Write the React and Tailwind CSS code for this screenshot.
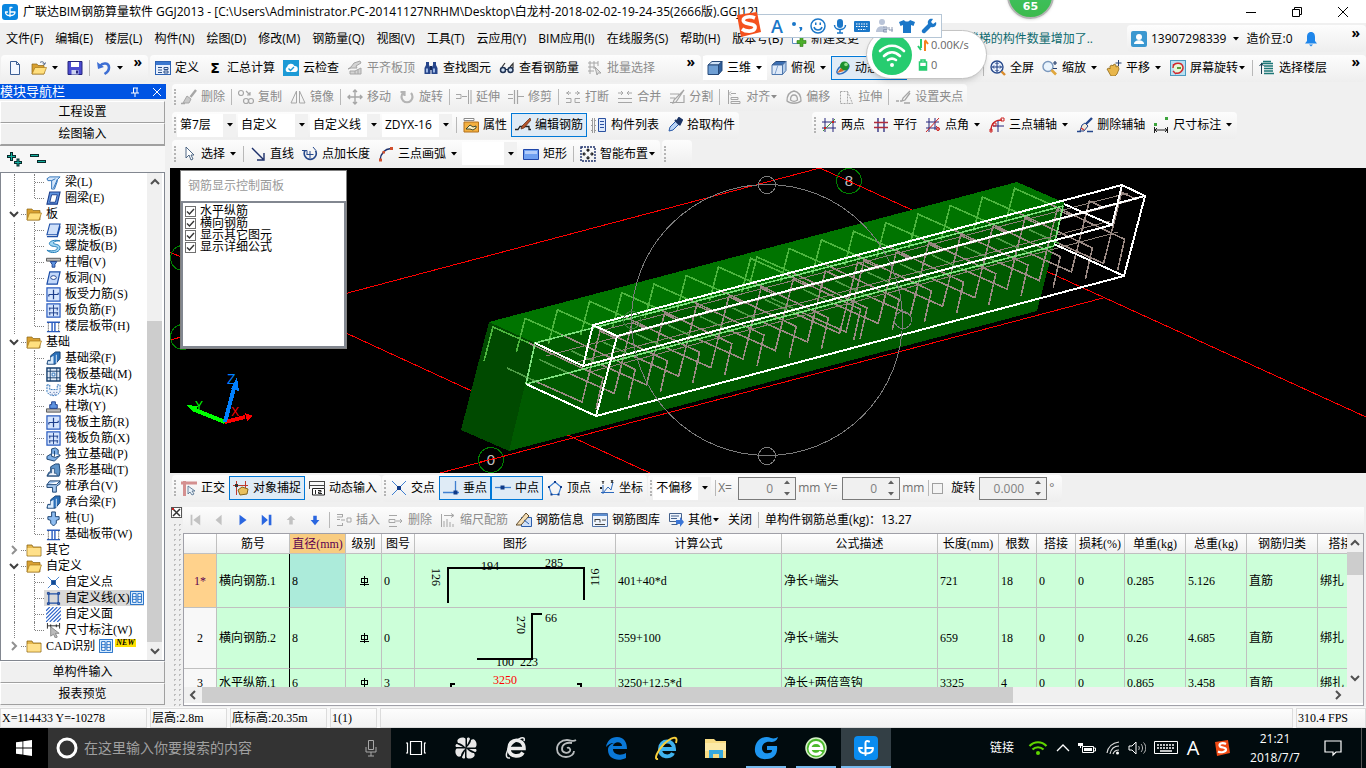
import React from 'react';
import clsx from 'clsx';

const UI_FONT = "font-['Open_Sans','Noto_Sans_CJK_SC',sans-serif]";
const SONG_FONT = "font-['Liberation_Serif','Noto_Sans_CJK_SC',serif]";

/* ---------- icons, all on a 16x16 grid ---------- */

const G = '#a6a6a6';

const icons = {
  logo: (
    <>
      <rect width="16" height="16" rx="3" fill="#0a86e0" />
      <path d="M10 3.500H8V12.500M5.500 8H3.500c0 2.500 2 3.500 4.500 3.500M8 8h5c0 2.300-1.500 3.500-5 3.500" stroke="#fff" strokeWidth="1.300" fill="none" strokeLinecap="round" strokeLinejoin="round" />
    </>
  ),
  newFile: <path d="M3.500 1.500h6l3 3v10h-9zM9.500 1.500v3h3" fill="#f4f8ff" stroke="#3d5f94" />,
  open: (
    <>
      <path d="M1 4h5l1 1.500h6V14H1z" fill="#d9a030" stroke="#8a6414" strokeWidth=".7" />
      <path d="M4 7.500h11.500L13 14H1z" fill="#ffdf7e" stroke="#a87a1c" strokeWidth=".7" />
      <path d="M9 2.500c2-1.500 4-.5 4.500 1.500M14.500 2.500l-.8 2-2-.8" stroke="#4a5e80" fill="none" />
    </>
  ),
  folderOpen: (
    <>
      <path d="M1 3h5l1 1.500h7V14H1z" fill="#d9a030" stroke="#8a6414" strokeWidth=".7" />
      <path d="M3.500 7H15.500L13 14H1z" fill="#ffdf7e" stroke="#a87a1c" strokeWidth=".7" />
    </>
  ),
  save: (
    <>
      <path d="M1 1.500h14v13H1z" fill="#4b4bd0" stroke="#26267c" />
      <path d="M4 2h8v5H4z" fill="#fff" />
      <path d="M4.500 10h7v4.500h-7z" fill="#cdd3f0" />
      <path d="M9 10.500h2v3H9z" fill="#26267c" />
    </>
  ),
  undo: (
    <>
      <path d="M4 6c3-4 9-3 9 1.500 0 3-2 5-4.500 6.500" stroke="#3e6fd4" strokeWidth="2.600" fill="none" />
      <path d="M1 2l1 7 6-2z" fill="#3e6fd4" />
    </>
  ),
  define: (
    <>
      <rect x=".5" y="1.500" width="15" height="13" fill="#e8f1ff" stroke="#2c62b4" />
      <path d="M1 2h14v3H1z" fill="#3b78d0" />
      <path d="M3 7.500h4M3 10h4M3 12.500h4M9 7.500h4v2H9zM9 11h4v2H9z" stroke="#2c4f86" fill="none" />
    </>
  ),
  cloudCheck: (
    <>
      <rect width="16" height="16" fill="#1c9ad6" />
      <path d="M4 12a3 3 0 0 1 0-5 4 4 0 0 1 7.500-1 3 3 0 0 1 .5 6z" fill="#fff" />
      <path d="M5.500 8.500l2 2 3.500-3.500" stroke="#1c9ad6" strokeWidth="1.400" fill="none" />
    </>
  ),
  slabTop: (
    <>
      <path d="M1 9l3-2 3-4 6-2 1 2-5 3 1 2H4z" fill="#d4d4d4" stroke={G} />
      <path d="M3 11h5l6-3v6H3zM8 11v3M11 9.500V14" fill="#d4d4d4" stroke={G} />
    </>
  ),
  binoculars: (
    <>
      <path d="M1.500 14V8L3 5V2h3v3l1.500 3v6zM8.500 14V8L10 5V2h3v3l1.500 3v6z" fill="#26458a" />
      <path d="M3 8.500h2v4H3zM10 8.500h2v4h-2z" fill="#9db8e6" />
      <path d="M7 6h2v4H7z" fill="#13285a" />
    </>
  ),
  glasses: (
    <>
      <path d="M3 7l3-4M11 7l3-3.500V8" stroke="#333" strokeWidth="1.200" fill="none" />
      <circle cx="4" cy="10" r="2.500" stroke="#1d3050" strokeWidth="1.500" fill="#cfe0f4" />
      <circle cx="11.500" cy="10" r="2.500" stroke="#1d3050" strokeWidth="1.500" fill="#cfe0f4" />
      <path d="M6.500 9.500h2.500" stroke="#1d3050" />
    </>
  ),
  batch: <path d="M1 3h10M1 7h7M1 11h6M3 1v13M7 1v8M11 1v5M8 7l6 6-3 0-1 2z" stroke={G} fill="#ddd" />,
  cube: (
    <>
      <path d="M1 5l4-3.500h10L11.500 5z" fill="#cfe2f7" stroke="#274a7a" />
      <path d="M1 5h10.500v9.500H1z" fill="#6f9fd4" stroke="#274a7a" />
      <path d="M11.500 5L15 1.500v9l-3.500 4z" fill="#2f5f9c" stroke="#274a7a" />
    </>
  ),
  topView: (
    <>
      <path d="M1 5l4-3.500h10L11.500 5z" fill="#3b6fb4" stroke="#274a7a" />
      <path d="M1 5h10.500v9.500H1z" fill="#dfeaf8" stroke="#4e77ad" />
      <path d="M11.500 5L15 1.500v9l-3.500 4z" fill="#b7cfeb" stroke="#4e77ad" />
      <path d="M4 14l3-9" stroke="#7fa2cf" />
    </>
  ),
  orbit: (
    <>
      <ellipse cx="8" cy="9" rx="7" ry="3.500" transform="rotate(-35 8 9)" fill="none" stroke="#2f6fc0" strokeWidth="1.400" />
      <circle cx="9.500" cy="6" r="4.500" fill="#1d8f2d" />
      <circle cx="11" cy="4.500" r="1.800" fill="#8fe08a" />
      <path d="M2 13l4-5 3 3z" fill="#d66a28" />
    </>
  ),
  fullScreen: (
    <>
      <circle cx="7" cy="7" r="6" fill="#eaf2fd" stroke="#27498c" strokeWidth="1.400" />
      <path d="M7 2.500v9M2.500 7h9M5.500 4L7 2.500 8.500 4M5.500 10L7 11.500 8.500 10M4 5.500L2.500 7 4 8.500M10 5.500L11.500 7 10 8.500" stroke="#1b3a80" fill="none" />
      <path d="M11.500 11.500l3.500 3.500" stroke="#d98b2b" strokeWidth="2.400" />
    </>
  ),
  zoom: (
    <>
      <circle cx="6" cy="6.500" r="5" fill="#eaf4fd" stroke="#7b98bd" strokeWidth="1.400" />
      <path d="M9.500 10l4.500 4.500" stroke="#e0a63c" strokeWidth="2.600" />
      <path d="M11 3h4M13 1v4M11 8.500h4" stroke="#26406f" strokeWidth="1.200" />
    </>
  ),
  pan: (
    <>
      <path d="M1 9l2-1 1 1V6l2-1 1 1 1-2 2 1v2l2-1 1 3-2 5-2 2H5z" fill="#e8b64c" stroke="#8f6a1c" strokeWidth=".8" />
      <path d="M12.500 0v6M9.500 3h6" stroke="#26406f" />
    </>
  ),
  rotateScreen: (
    <>
      <rect x=".5" y=".5" width="15" height="15" fill="#b9e0f2" stroke="#4c9ac0" />
      <circle cx="8" cy="8" r="4.500" fill="#e9f6d6" />
      <path d="M3 7c1-5 9-5 10 0 .5 4-4 7-7 6M3 11l3 3M3.500 4L3 8" stroke="#d6282a" strokeWidth="1.400" fill="none" />
      <path d="M7 8h4" stroke="#5b9c3c" strokeWidth="2" />
    </>
  ),
  floors: (
    <>
      <path d="M5 6h9M5 8.500h9M5 11h9M5 13.500h10" stroke="#1c7777" strokeWidth="1.400" />
      <path d="M2 3.500h12M4 1.500h8" stroke="#1c7777" strokeWidth="1.600" />
      <path d="M2.500 3v11M.5 6l2-2.500 2 2.500" stroke="#173f52" fill="none" />
    </>
  ),
  erase: (
    <>
      <path d="M15 1L9.500 8" stroke={G} strokeWidth="2.400" />
      <path d="M6 7l4 3-2 4H2z" fill="#c9c9c9" stroke={G} />
      <path d="M0 14.500h4" stroke={G} strokeWidth="1.500" />
    </>
  ),
  copy: (
    <g fill="none" stroke={G} strokeWidth="1.200">
      <circle cx="3" cy="4" r="2.500" />
      <circle cx="8" cy="12" r="2.500" />
      <circle cx="13" cy="12" r="2.500" />
      <path d="M8 2l4 4M12 3v3H9" />
    </g>
  ),
  mirror: <path d="M6.500 2v12H1zM9.500 2v12H15z" stroke={G} fill="none" />,
  move: <path d="M8 1v14M1 8h14M6 3l2-2 2 2M6 13l2 2 2-2M3 6L1 8l2 2M13 6l2 2-2 2" stroke={G} strokeWidth="1.400" fill="none" />,
  rotate: <path d="M4 4a5.500 5.500 0 1 0 8 0M1.500 3h4v4" stroke="#b4b4b4" strokeWidth="2.200" fill="none" />,
  extend: <path d="M0 5.500h5v4H0M6 7.500h5M12.500 1v14M15 1v14" stroke={G} fill="none" />,
  trim: <path d="M0 5.500h5M0 9.500h5M10 7.500h6M6.500 1v14M9.500 1v14" stroke={G} strokeWidth="1.200" fill="none" />,
  breakIt: <path d="M1 4h5M10 4h5M4 2l-2 2 2 2M12 2l2 2-2 2M1 9.500h5v4H1M15 9.500h-5v4h5" stroke={G} fill="none" />,
  merge: <path d="M1 4h5M10 4h5M4 2l2 2-2 2M12 2l-2 2 2 2M1 9.500h14M1 13.500h14" stroke={G} fill="none" />,
  split: <path d="M1 5h9M1 13.500h14V6M1 9h5M15 1L5 11l-1 3 3-1z" stroke={G} strokeWidth="1.200" fill="none" />,
  align: <path d="M2.500 1v14M5 4.500h5M5 2.500l-2 2 2 2M5 8.500h7v2H5zM5 12.500h9v2H5z" stroke={G} fill="none" />,
  offset: <path d="M1 12c0-5 2-9 7-10 5 1 7 5 7 10-3 3-11 3-14 0zM4.500 11c0-3 1-5 3.500-5s3.500 2 3.500 5c-2 1.500-5 1.500-7 0z" stroke={G} strokeWidth="1.300" fill="none" />,
  stretch: <path d="M2.500 2.500h7v12h-7zM9.500 2.500l5 12h-5" stroke={G} strokeDasharray="2 1" fill="none" />,
  grip: <path d="M1 12h3M5 12h2M15 2L8 9l-1 3 3-1 5-7M9 14h6" stroke={G} strokeWidth="1.300" fill="none" />,
  property: (
    <>
      <path d="M1 1.500h10v2H1z" fill="#fff" stroke="#8a8a8a" />
      <path d="M1 5h14.500v10H1z" fill="#f3b040" stroke="#b2711d" />
      <path d="M3 12l4-4 3 2 3-1v2l-3 2-3-1z" fill="#fff3c4" stroke="#2a3c2a" strokeWidth=".9" />
    </>
  ),
  editBar: (
    <>
      <path d="M0 12.500h3l2-3h9v3h2" stroke="#222" strokeWidth="1.300" fill="none" />
      <path d="M15 1L7 9l-1 3 3-1 7-8z" fill="#b4552c" stroke="#5c2b14" strokeWidth=".7" />
    </>
  ),
  compList: (
    <>
      <path d="M1 2h3v3H1zM1 7h3v3H1zM1 12h3v3H1z" fill="none" stroke="#444" strokeDasharray="1 1" />
      <path d="M7.500 1.500h7v13h-7z" fill="#dce8fb" stroke="#2b51a0" />
      <path d="M9 4.500h4M9 7.500h4M9 10.500h4" stroke="#2b51a0" />
    </>
  ),
  dropper: (
    <>
      <path d="M2 14l1-4 6-6 3 3-6 6z" fill="#b9d3f5" stroke="#2a5aa8" />
      <path d="M8 3l5 5M10 4l2-3 3 2-2 4z" stroke="#1c3566" strokeWidth="2" fill="#1c3566" />
    </>
  ),
  twoPoint: (
    <>
      <path d="M4 1v14M12 1v14M1 5h14M1 11h14" stroke="#26267c" />
      <path d="M2 14L14 2" stroke="#3f8f3f" />
      <path d="M3 10h2v2H3zM11 4h2v2h-2z" fill="#c22" />
    </>
  ),
  parallel: (
    <>
      <path d="M5 1v14M11 1v14" stroke="#26267c" strokeWidth="1.300" />
      <path d="M1 5.500h14M1 10.500h14" stroke="#b02a3a" strokeWidth="1.300" />
    </>
  ),
  pointAngle: (
    <>
      <path d="M4 1v14M10 1v12M1 5h13M1 11h11" stroke="#26267c" />
      <path d="M1 15L14 1M11 9a4 4 0 0 1 2 5" stroke="#c22" fill="none" />
      <circle cx="13" cy="12" r="1.500" fill="none" stroke="#c22" />
    </>
  ),
  threeAxis: (
    <>
      <path d="M2 14C2 6 6 3 13 3" stroke="#c22" strokeWidth="1.300" fill="none" />
      <path d="M9 4v11M4 9h11" stroke="#26267c" />
      <path d="M1 12h2v3H1zM12 1h3v3h-3zM4 6h3v3H4z" fill="none" stroke="#c22" />
    </>
  ),
  delAxis: (
    <>
      <path d="M15 1L9 7" stroke="#26478c" strokeWidth="2.400" />
      <path d="M5 8l3-2 3 3-4 5H3z" fill="#f4ead8" stroke="#26478c" />
      <path d="M4 11l3 2" stroke="#c33" strokeWidth="1.500" />
      <path d="M0 14.500h4M10 14.500h6" stroke="#26478c" strokeWidth="1.500" />
    </>
  ),
  dimension: (
    <>
      <path d="M1 6h3v3H1zM12 0h3v3h-3z" fill="#3da53d" />
      <path d="M1.500 10v6M14.500 10v6M2 13h12M4 11l-2 2 2 2M12 11l2 2-2 2" stroke="#222" fill="none" />
    </>
  ),
  pointer: <path d="M5 1v11l3-3 2 5 2-1-2-4h3z" fill="#fff" stroke="#3c5878" strokeWidth=".9" />,
  line: <path d="M2 2l11 11M14 7v7H7" stroke="#1c2f6a" strokeWidth="1.400" fill="none" />,
  lengthPt: (
    <>
      <path d="M3 4.500a6 6 0 1 0 10.500 0" stroke="#27498c" strokeWidth="1.600" fill="none" />
      <path d="M0 4.500h5v4M11 1l2.500 3M8 5v7M4.500 8.500h7" stroke="#27498c" fill="none" />
    </>
  ),
  arc: (
    <>
      <path d="M2 14C3 7 7 3 13 2.500" stroke="#1c2f6a" strokeWidth="1.300" fill="none" />
      <path d="M1 12.500h3v3H1zM12 1h3v3h-3zM4.500 5h2.500v2.500H4.500z" fill="#d0502e" />
    </>
  ),
  rect: (
    <>
      <path d="M.5 3.500h15v10H.5z" fill="#6fa0f0" stroke="#1f46a8" />
      <path d="M2 5h12v3H2z" fill="#b3cdfa" />
    </>
  ),
  smart: (
    <>
      <path d="M1 1h14v14H1z" fill="none" stroke="#1c2f6a" strokeWidth="1.400" strokeDasharray="2 1" />
      <path d="M8 3v3M8 10v3M3 8h3M10 8h3M6.500 4.500L8 3l1.500 1.500M6.500 11.500L8 13l1.500-1.500M4.500 6.500L3 8l1.500 1.500M11.500 6.500L13 8l-1.500 1.500" stroke="#222" strokeWidth="1.200" fill="none" />
    </>
  ),
  ortho: (
    <>
      <path d="M3.500 1v15M0 3h16" stroke="#d49090" strokeWidth="3" />
      <path d="M7 6v8l2-2 2 3 2-1-2-3h3z" fill="#e8f0f8" stroke="#4b6a88" strokeWidth=".8" />
    </>
  ),
  snap: (
    <>
      <path d="M3.500 1v14M0 5.500h15M12.500 1v7" stroke="#c0392b" />
      <path d="M5 10l4-3 6 2-1 5-7 1z" fill="#e9c05e" stroke="#86641c" />
      <path d="M2 4h3v3H2z" fill="#333" />
    </>
  ),
  dynInput: (
    <>
      <path d="M0 1.500h16M0 5.500h16M.5 1v8M15.500 1v7" stroke="#444" fill="none" />
      <path d="M3.500 8.500h12v6.500h-12z" fill="#fff" stroke="#222" />
      <path d="M6.500 10v4M9 10.500h3v1.500H9.500v1.500H13" stroke="#222" fill="none" />
    </>
  ),
  cross: (
    <>
      <path d="M1 1l14 14M15 1L1 15" stroke="#3f7fd0" />
      <path d="M6 6h4v4H6z" fill="#0f3a88" />
    </>
  ),
  perp: (
    <>
      <path d="M0 12.500h16M12.500 1v11" stroke="#3f7fd0" strokeWidth="1.300" />
      <path d="M10.500 10.500h4v4h-4z" fill="#0f3a88" />
    </>
  ),
  mid: (
    <>
      <path d="M0 7.500h16" stroke="#3f7fd0" strokeWidth="1.300" />
      <path d="M5.500 5.500h4v4h-4z" fill="#0f3a88" />
    </>
  ),
  vertex: (
    <>
      <path d="M8 2l6 5-2.500 7.500h-7L2 7z" fill="none" stroke="#3f7fd0" strokeWidth="1.200" />
      <path d="M7 1h2v2H7zM1 6h2v2H1zM13 6h2v2h-2zM3.500 13.500h2v2h-2zM10.500 13.500h2v2h-2z" fill="#0f3a88" />
    </>
  ),
  coord: (
    <>
      <path d="M4 5v9M2 12.500h13M4 13l5-6 3 3 2-8" stroke="#2b68bc" fill="none" />
      <path d="M3 1l1 1.500V4M5 1L4 2.500M1 7l2 2M3 7L1 9M12 0l2 3M14 0l-2 3" stroke="#222" fill="none" />
    </>
  ),
  insert: <path d="M1 2.500h5M1 7.500h3M1 13.500h5M6.500 2v3H1M6.500 11v3M5 8h4M11 6h4v4h-4z" stroke={G} fill="none" />,
  remove: <path d="M1 3.500h8M1 7.500h6v3H1zM1 14.500h8M8 9h6M12 7l2 2-2 2" stroke={G} fill="none" />,
  scaleBar: <path d="M1.500 2v13M4 9v6M7 7v8M10 10v5M13 12v3M4 3.500h9M11 1.500l3 2-3 2" stroke={G} fill="none" />,
  barInfo: (
    <>
      <path d="M5.500 5.500h10v9h-10z" fill="#cfe0f8" stroke="#2b5cab" />
      <path d="M0 13L10 1l3 3L5 13z" fill="#f4ddb4" stroke="#5e4a2a" />
      <path d="M8 8l5 4" stroke="#2b5cab" />
    </>
  ),
  barLib: (
    <>
      <path d="M.5 1.500h15v13H.5z" fill="#eef4fc" stroke="#5173a8" />
      <path d="M1 2h14v2H1z" fill="#5f8fd0" />
      <path d="M3 7.500h5v3M3 7v3M10 8h4M3 12.500h10" stroke="#444" fill="none" />
    </>
  ),
  other: (
    <>
      <path d="M1.500 1.500h12v8h-12zM3 4h8M3 6.500h6M3.500 12.500h6" stroke="#44618c" fill="#eef4fc" />
      <path d="M8 8h4V5l4 5-4 5v-3H8z" fill="#3c76d6" />
    </>
  ),
  first: <path d="M3 2h2v12H3zM14 2v12L6 8z" fill="#c2c2c2" />,
  prev: <path d="M11 2v12L4 8z" fill="#c2c2c2" />,
  next: <path d="M4 2v12l8-6z" fill="#2a66e0" />,
  last: <path d="M2 2v12l7-6zM10 2h3v12h-3z" fill="#2a66e0" />,
  up: <path d="M8 3l5 5h-3v5H6V8H3z" fill="#c2c2c2" />,
  down: <path d="M8 14l5-6h-3V3H6v5H3z" fill="#2a66e0" />,
  folder: (
    <>
      <path d="M1 3h5l1 2h8v9H1z" fill="#e6b84c" stroke="#8a6414" strokeWidth=".8" />
      <path d="M1.500 6h13v7.500h-13z" fill="#ffe08a" />
    </>
  ),
  beam: <path d="M1 4l3-2h11l-3 3v2l-3 8H6V6H2zM6 6l4-2M8 14l4-9" fill="#d5e7fb" stroke="#2a6fb8" />,
  ringBeam: (
    <>
      <path d="M4 1h11l-3 13H1z" fill="#5f94e0" stroke="#1d3f8c" strokeWidth="1.200" />
      <path d="M6 4h6l-2 8H4z" fill="#fff" stroke="#1d3f8c" />
    </>
  ),
  slab: (
    <>
      <path d="M4 1h11l-3 11.500H1z" fill="#cfe0fa" stroke="#1d4fa8" strokeWidth="1.200" />
      <path d="M1 14.500h11l3-11" stroke="#1d4fa8" strokeWidth="1.500" fill="none" />
    </>
  ),
  spiral: <path d="M15 2C8 0 2 3 4 6s9 1 8 4-7 3-11 2c4 4 13 3 14-2s-8-4-7-6 4-2 7-2z" fill="#9fd6f4" stroke="#1c78b4" />,
  cap: (
    <>
      <path d="M.5 3.500h15v3H.5z" fill="#bbb" stroke="#555" />
      <path d="M4.500 7h7l-2 3v3h-3v-3z" fill="#5f94e0" stroke="#1d3f8c" />
    </>
  ),
  hole: (
    <>
      <path d="M4 1h11l-3 13H1z" fill="#c2d8fa" stroke="#1d4fa8" strokeWidth="1.300" />
      <ellipse cx="8" cy="7" rx="3" ry="2" fill="#fff" stroke="#1d3f8c" />
    </>
  ),
  gridBar: (
    <>
      <path d="M1 1h14v14H1z" fill="#d5e5fd" stroke="#2a5cc0" strokeWidth="1.300" />
      <path d="M8 3v10M3 8h10M3 8v2M13 8V6" stroke="#1d3f8c" strokeWidth="1.300" fill="none" />
    </>
  ),
  gridBar2: (
    <>
      <path d="M1 1h14v14H1z" fill="#d5e5fd" stroke="#2a5cc0" strokeWidth="1.300" />
      <path d="M8 2v12M3 5.500h10M3 10.500h10M4 5v3M12 5v3M4 10v3M12 10v3" stroke="#1d3f8c" fill="none" />
    </>
  ),
  strip: (
    <>
      <path d="M1 3.500h14M1 13.500h14M6.500 3v10M9.500 3v10" stroke="#2a5cc0" strokeWidth="1.500" />
      <path d="M2.500 4v9M13.500 4v9" stroke="#333" strokeDasharray="1 1" />
    </>
  ),
  foundBeam: (
    <>
      <path d="M1 14l1-4h3V5l5-4h5v7l-5 6z" fill="#2a6fb8" stroke="#17406f" />
      <path d="M2 13.500V11h3V7l3-2v8.500z" fill="#dcecfb" />
      <path d="M11 13.500V4" stroke="#dcecfb" />
    </>
  ),
  raft: (
    <>
      <path d="M1 1h14v14H1z" fill="#e2ecf8" stroke="#17406f" strokeWidth="1.500" />
      <path d="M4.500 1v14M11.500 1v14M1 4.500h14M1 11.500h14" stroke="#17406f" />
      <path d="M6.500 6.500h3v3h-3z" fill="#fff" stroke="#2a6fb8" />
    </>
  ),
  sump: (
    <>
      <path d="M1 2h3v5h8V2h3v7c-2 6-12 6-14 0z" fill="#eef4fc" stroke="#2a6fb8" strokeDasharray="2 1" />
      <path d="M4 10h1M8 10h1M11 10h1M6 12h1M9 12h1" stroke="#1d3f8c" />
    </>
  ),
  pier: (
    <>
      <path d="M.5 10.500h15v3.500H.5z" fill="#bbb" stroke="#555" />
      <path d="M6 3h4v3h2v4H4V6h2z" fill="#5f94e0" stroke="#1d3f8c" />
    </>
  ),
  isolated: <path d="M1 10l5-3V2l4-1 3 2v4l2 2-6 6-8-2zM6 7v3l4 1 5-2M9 4v6" fill="#7fb0e6" stroke="#17406f" />,
  stripFound: (
    <>
      <path d="M1 14l2-4 2-1V4l5-3h4l1 8-1 5z" fill="#5f94c8" stroke="#17406f" />
      <path d="M2 13.500l2-3h2V6h3v5h2l1 2.500z" fill="#eef4fc" stroke="#17406f" strokeWidth=".7" />
    </>
  ),
  pileCap: <path d="M1 6l3-4h11v3l-4 3v6H7V9H1zM1 6h10l4-4" fill="#a8caf0" stroke="#17406f" />,
  pile: <path d="M6 1h4v5h4v3l-3 1v3l-3 3-3-3v-3L2 9V6h4z" fill="#8fbdf0" stroke="#17406f" />,
  customPt: (
    <>
      <path d="M2 2l12 12M14 2L2 14" stroke="#3f7fd0" />
      <path d="M5.500 5.500h5v5h-5z" fill="#0f4a98" />
    </>
  ),
  customLine: (
    <>
      <path d="M3 3h10v10H3z" fill="none" stroke="#1d4fa8" strokeWidth="1.300" />
      <path d="M1.500 1.500h2v2h-2zM12.500 1.500h2v2h-2zM1.500 12.500h2v2h-2zM12.500 12.500h2v2h-2z" fill="#3f7fd0" stroke="#1d3f8c" />
    </>
  ),
  customFace: <path d="M0 4l4-4M0 8l8-8M0 12L12 0M0 16L16 0M4 16L16 4M8 16l8-8M12 16l4-4" stroke="#2a62c8" strokeWidth="1.200" />,
  dimMark: (
    <>
      <path d="M1.500 0v6M14.500 0v6M2 3h12M5 1.500v3M11 1.500v3" stroke="#222" />
      <path d="M5 4v10l3-2 2 4 2-1-2-4h4z" fill="#bbb" stroke="#888" />
    </>
  ),
  video: (
    <>
      <path d="M.5.5h15v15H.5z" fill="#d7ecff" stroke="#0a5fc0" />
      <path d="M3 3h4v10H3zM9 3h4v10H9z" fill="#fff" stroke="#0a5fc0" />
      <path d="M3 6.500h4M3 9.500h4M9 6.500h4M9 9.500h4" stroke="#0a5fc0" />
    </>
  ),
  user: (
    <>
      <rect width="16" height="16" rx="2" fill="#3b98d0" />
      <circle cx="8" cy="6" r="3" fill="#fff" />
      <path d="M3 13c0-5 10-5 10 0z" fill="#fff" />
    </>
  ),
  bell: <path d="M8 1c3 0 4 2.500 4 5v4l2 2.500H2L4 10V6c0-2.500 1-5 4-5zM6 13.500h4L8 15.500z" fill="#1f86ea" />,
  addDoc: (
    <>
      <path d="M1.500 1.500h10v11h-10z" fill="#fff" stroke="#5e8cc0" />
      <path d="M9 6.500h3v3h3v3h-3v3H9v-3H6v-3h3z" fill="#4cae2a" stroke="#2b7a14" strokeWidth=".6" />
    </>
  ),
};

function Ico({ name, className = 'size-4' }) {
  return (
    <svg viewBox="0 0 16 16" className={clsx('shrink-0', className)} aria-hidden="true">
      {icons[name]}
    </svg>
  );
}

function Caret({ className }) {
  return (
    <svg viewBox="0 0 8 4" className={clsx('h-1 w-2 shrink-0', className)} aria-hidden="true">
      <path d="M1 0h6L4 3.500z" fill="currentColor" />
    </svg>
  );
}

function Chevron({ dir = 'down', className }) {
  const d = {
    down: 'M1 3l4 4 4-4',
    up: 'M1 7l4-4 4 4',
    left: 'M7 1L3 5l4 4',
    right: 'M3 1l4 4-4 4',
  }[dir];
  return (
    <svg viewBox="0 0 10 10" className={clsx('size-2.5 shrink-0', className)} aria-hidden="true">
      <path d={d} stroke="currentColor" strokeWidth="2" fill="none" />
    </svg>
  );
}

/* ---------- toolbar parts ---------- */

function Group({ grip = true, className, children }) {
  return (
    <div
      role="toolbar"
      className={clsx('flex h-[27px] shrink-0 items-center rounded-sm bg-linear-to-b from-[#fdfdfd] to-[#eeeeee]', className)}
    >
      {grip && <span className="mr-px ml-0.5 h-4 w-0.5 shrink-0 border-l-2 border-dotted border-[#b4b4b4]" />}
      {children}
    </div>
  );
}

function Sep() {
  return <span className="mx-0.5 h-4 w-px shrink-0 bg-[#b8b8b8]" />;
}

function Tool({ icon, label, active, disabled, caret, tight, sigma }) {
  return (
    <button
      type="button"
      disabled={disabled}
      className={clsx(
        'flex h-6 shrink-0 items-center border px-[3px] leading-4 whitespace-nowrap',
        tight ? 'gap-x-0' : 'gap-x-1',
        active ? 'border-[#0078d7] bg-[#dfebf6]' : 'border-transparent',
        disabled ? 'text-[#8c8c8c]' : 'text-black',
      )}
    >
      {icon && <Ico name={icon} className={tight ? 'mr-1 size-4' : 'size-4'} />}
      {sigma && <span className="w-4 text-center font-['DejaVu_Sans'] text-sm font-bold">Σ</span>}
      {label}
      {caret && <Caret />}
    </button>
  );
}

function IconButton({ icon, label, disabled }) {
  return (
    <button type="button" aria-label={label} disabled={disabled} className="flex size-6 shrink-0 items-center justify-center">
      <Ico name={icon} className="size-3.5" />
    </button>
  );
}

function More() {
  return (
    <button type="button" aria-label="更多" className="mb-3 ml-auto pr-1.5 text-sm leading-4 font-bold">
      »
    </button>
  );
}

function Combo({ label, value, className }) {
  return (
    <span className={clsx('mr-0.5 flex h-[23px] shrink-0 items-center bg-white', className)}>
      <select aria-label={label} className="h-5 min-w-0 flex-1 appearance-none overflow-hidden bg-white pl-[3px] outline-none">
        <option>{value}</option>
      </select>
      <span className="flex h-full w-[13px] items-center justify-center bg-[#f1f1f1]">
        <Caret />
      </span>
    </span>
  );
}

function Spinner({ label, value, className }) {
  return (
    <span className={clsx('flex h-[23px] shrink-0 items-center border border-[#7a7a7a] bg-[#f0f0f0] pr-1', className)}>
      <input aria-label={label} defaultValue={value} className="h-5 min-w-0 flex-1 bg-transparent pr-2.5 text-right text-[#808080] outline-none" />
      <span className="flex flex-col gap-2 text-[#606060]">
        <Caret className="rotate-180" />
        <Caret />
      </span>
    </span>
  );
}

/* ---------- top of the window ---------- */

function TitleBar() {
  return (
    <header className="flex h-[23px] shrink-0 items-center bg-white pl-0.5">
      <Ico name="logo" />
      <h1 className="ml-[5px] flex-1 truncate leading-4">
        广联达BIM钢筋算量软件 GGJ2013 - [C:\Users\Administrator.PC-20141127NRHM\Desktop\白龙村-2018-02-02-19-24-35(2666版).GGJ12]
      </h1>
      <button type="button" aria-label="最小化" className="flex w-[46px] justify-center">
        <svg viewBox="0 0 10 10" className="size-2.5"><path d="M0 5.500h10" stroke="#000" /></svg>
      </button>
      <button type="button" aria-label="还原" className="flex w-[46px] justify-center">
        <svg viewBox="0 0 10 10" className="size-2.5"><path d="M.5 2.500h7v7h-7zM2.500 2V.5h7v7H8" stroke="#000" fill="none" /></svg>
      </button>
      <button type="button" aria-label="关闭" className="flex w-[46px] justify-center">
        <svg viewBox="0 0 10 10" className="size-2.5"><path d="M0 0l10 10M10 0L0 10" stroke="#000" /></svg>
      </button>
    </header>
  );
}

const menus = [
  '文件(F)', '编辑(E)', '楼层(L)', '构件(N)', '绘图(D)', '修改(M)', '钢筋量(Q)', '视图(V)', '工具(T)',
  '云应用(Y)', 'BIM应用(I)', '在线服务(S)', '帮助(H)', '版本号(B)',
];

function MenuBar() {
  return (
    <div className="flex h-[31px] shrink-0 items-center">
      <nav className="flex flex-1 items-center gap-3 overflow-hidden pl-1.5">
        {menus.map((m) => (
          <button key={m} type="button" className="shrink-0 leading-4 whitespace-nowrap">{m}</button>
        ))}
        <button type="button" className="-ml-1 flex shrink-0 items-center gap-1 leading-4">
          <Ico name="addDoc" />
          新建变更
          <Caret className="ml-2" />
        </button>
      </nav>
      <a href="#notice" className="mr-[34px] w-[145px] shrink-0 text-right leading-4 whitespace-nowrap text-[#0d6a6e]">
        楼梯的构件数量增加了..
      </a>
      <Group grip={false} className="w-[239px] gap-1 pl-1">
        <Ico name="user" />
        <span className="leading-4">13907298339</span>
        <Caret className="mx-0.5" />
        <span className="leading-4">造价豆:0</span>
        <Ico name="bell" className="ml-1.5 size-4" />
        <More />
      </Group>
    </div>
  );
}

function MainToolbar() {
  return (
    <div className="flex h-7 shrink-0 items-center gap-0.5 pl-px">
      <Group grip={false} className="w-[147px] pl-0.5">
        <Tool icon="newFile" />
        <Tool icon="open" caret />
        <Tool icon="save" />
        <Sep />
        <Tool icon="undo" caret />
        <More />
      </Group>
      <Group grip={false} className="w-[551px] pl-px">
        <Tool icon="define" label="定义" />
        <Tool sigma label="汇总计算" />
        <Tool icon="cloudCheck" label="云检查" />
        <Tool icon="slabTop" label="平齐板顶" disabled />
        <Tool icon="binoculars" label="查找图元" />
        <Tool icon="glasses" label="查看钢筋量" />
        <Tool icon="batch" label="批量选择" disabled />
        <More />
      </Group>
      <Group grip={false} className="min-w-0 flex-1">
        <span className="bg-white"><Tool icon="cube" label="三维" caret /></span>
        <Tool icon="topView" label="俯视" caret />
        <Tool icon="orbit" label="动态观察" active />
        <span className="w-[74px] shrink-0" />
        <Sep />
        <Tool icon="fullScreen" label="全屏" />
        <Tool icon="zoom" label="缩放" caret />
        <Tool icon="pan" label="平移" caret />
        <Tool icon="rotateScreen" label="屏幕旋转" caret tight />
        <Sep />
        <Tool icon="floors" label="选择楼层" />
        <More />
      </Group>
    </div>
  );
}

/* ---------- left navigation ---------- */

const tree = [
  { label: '梁(L)', icon: 'beam' },
  { label: '圈梁(E)', icon: 'ringBeam', last: true },
  { label: '板', open: true },
  { label: '现浇板(B)', icon: 'slab' },
  { label: '螺旋板(B)', icon: 'spiral' },
  { label: '柱帽(V)', icon: 'cap' },
  { label: '板洞(N)', icon: 'hole' },
  { label: '板受力筋(S)', icon: 'gridBar' },
  { label: '板负筋(F)', icon: 'gridBar2' },
  { label: '楼层板带(H)', icon: 'strip', last: true },
  { label: '基础', open: true },
  { label: '基础梁(F)', icon: 'foundBeam' },
  { label: '筏板基础(M)', icon: 'raft' },
  { label: '集水坑(K)', icon: 'sump' },
  { label: '柱墩(Y)', icon: 'pier' },
  { label: '筏板主筋(R)', icon: 'gridBar' },
  { label: '筏板负筋(X)', icon: 'gridBar2' },
  { label: '独立基础(P)', icon: 'isolated' },
  { label: '条形基础(T)', icon: 'stripFound' },
  { label: '桩承台(V)', icon: 'pileCap' },
  { label: '承台梁(F)', icon: 'foundBeam' },
  { label: '桩(U)', icon: 'pile' },
  { label: '基础板带(W)', icon: 'strip', last: true },
  { label: '其它', open: false },
  { label: '自定义', open: true },
  { label: '自定义点', icon: 'customPt' },
  { label: '自定义线(X)', icon: 'customLine', selected: true, video: true },
  { label: '自定义面', icon: 'customFace' },
  { label: '尺寸标注(W)', icon: 'dimMark', last: true },
  { label: 'CAD识别', open: false, video: true, fresh: true },
];

function TreeRow({ item }) {
  if (!item.icon) {
    return (
      <li className="flex h-4 items-center">
        <span className="flex w-[18px] justify-center pl-1 text-[#404040]">
          <Chevron dir={item.open ? 'down' : 'right'} className={item.open ? '' : 'text-[#909090]'} />
        </span>
        <span className="w-[5px] border-t border-dotted border-[#808080]" />
        <Ico name={item.open ? 'folderOpen' : 'folder'} className="mr-1 size-4" />
        <span className="leading-4">{item.label}</span>
        {item.video && <Ico name="video" className="ml-1 size-3.5" />}
        {item.fresh && <b className="mb-1.5 ml-0.5 bg-[#ffe000] px-px text-[8px] leading-2 italic">NEW</b>}
      </li>
    );
  }
  return (
    <li className="flex h-4 items-center">
      <span className="h-4 w-3 shrink-0 border-r border-dotted border-[#808080]" />
      <span className={clsx('w-5 shrink-0 border-r border-dotted border-[#808080]', item.last ? 'mb-2 h-2' : 'h-4')} />
      <span className="w-[9px] shrink-0 border-t border-dotted border-[#808080]" />
      <span className={clsx('flex h-4 items-center gap-1 pl-0.5', item.selected && 'bg-[#d9d9d9]')}>
        <Ico name={item.icon} className="size-[15px]" />
        <span className="leading-4 whitespace-nowrap">{item.label}</span>
        {item.video && <Ico name="video" className="-ml-1 size-3.5" />}
      </span>
    </li>
  );
}

function NavButton({ children }) {
  return (
    <button type="button" className="h-[22px] w-full shrink-0 border border-t-white border-r-[#a0a0a0] border-b-[#a0a0a0] border-l-white bg-[#f0f0f0] leading-4">
      {children}
    </button>
  );
}

function Sidebar() {
  return (
    <aside className={clsx('flex w-[166px] shrink-0 flex-col pt-0.5 pb-0.5', SONG_FONT)}>
      <div className="flex h-[15px] shrink-0 items-center bg-[#0054e3] text-white">
        <span className="flex-1 text-[13px] leading-[15px]">模块导航栏</span>
        <button type="button" aria-label="固定" className="mr-3">
          <svg viewBox="0 0 10 10" className="size-2.5"><path d="M3 1h5M3.500 1v5M7 1v5M1 6h8M5 6v4" stroke="#fff" fill="none" /></svg>
        </button>
        <button type="button" aria-label="关闭导航栏" className="mr-1">
          <svg viewBox="0 0 10 10" className="size-2.5"><path d="M1 1l8 8M9 1L1 9" stroke="#fff" /></svg>
        </button>
      </div>
      <div className="flex min-h-0 flex-1 flex-col pt-0.5 pr-px">
        <NavButton>工程设置</NavButton>
        <NavButton>绘图输入</NavButton>
        <div className="flex h-[27px] shrink-0 items-center gap-2 border-t border-[#a0a0a0] bg-[#f7f7f7] pl-1.5">
          <button type="button" aria-label="全部展开">
            <svg viewBox="0 0 16 16" className="size-4"><path d="M5.500 1v9M1 5.500h9M12 7.500v8M8 11.500h8" stroke="#0a2a2a" strokeWidth="3" /><path d="M5.500 2v7M2 5.500h7M12 8.500v6M9 11.500h6" stroke="#12b0a0" strokeWidth="1" /></svg>
          </button>
          <button type="button" aria-label="全部折叠">
            <svg viewBox="0 0 16 16" className="size-4"><path d="M0 4.500h9M7 10.500h9" stroke="#0a2a2a" strokeWidth="3" /><path d="M1 4.500h7M8 10.500h7" stroke="#12b0a0" strokeWidth="1" /></svg>
          </button>
        </div>
        <div className="flex min-h-0 flex-1 border border-[#828790] bg-white">
          <ul className="min-w-0 flex-1 overflow-hidden pt-px pl-0.5">
            {tree.map((item, i) => <TreeRow key={i} item={item} />)}
          </ul>
          <div className="mr-0.5 flex w-[15px] shrink-0 flex-col items-center bg-[#f0f0f0] text-[#505050]">
            <Chevron dir="up" className="my-1" />
            <span className="h-[130px]" />
            <span className="w-full flex-1 bg-[#cdcdcd]" />
            <Chevron className="my-1" />
          </div>
        </div>
        <NavButton>单构件输入</NavButton>
        <NavButton>报表预览</NavButton>
      </div>
    </aside>
  );
}

/* ---------- tool rows above the drawing ---------- */

function EditRows() {
  return (
    <div className="flex shrink-0 flex-col pt-px pl-0.5">
      <div className="flex h-7 items-center">
        <Group>
          <Tool icon="erase" label="删除" disabled />
          <Sep />
          <Tool icon="copy" label="复制" disabled />
          <Tool icon="mirror" label="镜像" disabled />
          <Sep />
          <Tool icon="move" label="移动" disabled />
          <Tool icon="rotate" label="旋转" disabled />
          <Sep />
          <Tool icon="extend" label="延伸" disabled />
          <Tool icon="trim" label="修剪" disabled />
          <Sep />
          <Tool icon="breakIt" label="打断" disabled />
          <Tool icon="merge" label="合并" disabled />
          <Tool icon="split" label="分割" disabled />
          <Sep />
          <Tool icon="align" label="对齐" disabled caret tight />
          <Tool icon="offset" label="偏移" disabled />
          <Tool icon="stretch" label="拉伸" disabled />
          <Sep />
          <Tool icon="grip" label="设置夹点" disabled />
        </Group>
      </div>
      <div className="flex h-7 items-center">
        <Group>
          <Combo label="楼层" value="第7层" className="w-[59px]" />
          <Combo label="构件类别" value="自定义" className="w-[70px]" />
          <Combo label="构件类型" value="自定义线" className="w-[70px]" />
          <Combo label="构件名称" value="ZDYX-16" className="w-[70px]" />
          <Sep />
          <Tool icon="property" label="属性" />
          <Tool icon="editBar" label="编辑钢筋" active />
          <Tool icon="compList" label="构件列表" />
          <Tool icon="dropper" label="拾取构件" />
        </Group>
        <Group className="ml-[73px]">
          <Tool icon="twoPoint" label="两点" />
          <Tool icon="parallel" label="平行" />
          <Tool icon="pointAngle" label="点角" caret />
          <Tool icon="threeAxis" label="三点辅轴" caret />
          <Tool icon="delAxis" label="删除辅轴" />
          <Tool icon="dimension" label="尺寸标注" caret />
        </Group>
      </div>
      <div className="flex h-[29px] items-center gap-0.5">
        <Group>
          <Tool icon="pointer" label="选择" caret />
          <Sep />
          <Tool icon="line" label="直线" />
          <Tool icon="lengthPt" label="点加长度" />
          <Tool icon="arc" label="三点画弧" caret />
          <Combo label="画弧方式" value="" className="w-[55px]" />
          <Tool icon="rect" label="矩形" />
          <Sep />
          <Tool icon="smart" label="智能布置" caret tight />
        </Group>
        <Group className="w-[30px]" />
      </div>
    </div>
  );
}

/* ---------- 3D view ---------- */

const STEP_X = 32.2;
const STEP_Y = -8.58;

const stirrups = [];
for (let i = 0; i < 9; i++) {
  stirrups.push([493 + STEP_X * i, 327 + STEP_Y * i]);
  stirrups.push([757 + STEP_X * i, 257 + STEP_Y * i]);
}

function Scene() {
  return (
    <svg
      viewBox="170 168 1196 305"
      preserveAspectRatio="xMidYMid slice"
      shapeRendering="crispEdges"
      className="absolute inset-0 size-full"
      role="img"
      aria-label="钢筋三维视图"
    >
      <g stroke="#f00" fill="none">
        <path d="M170 340L820 168L1366 417" />
        <path d="M170 252L650 473" />
      </g>
      <path d="M489 322L1017 182L1065 203L535 343z" fill="#007400" />
      <path d="M489 322L461 430L509 451L535 343z" fill="#004a00" />
      <path d="M535 343L1065 203L1037 311L509 451z" fill="#005a00" />
      <path d="M440 473L1103 298" stroke="#f00" />

      <g fill="none" strokeWidth="1.600">
        {stirrups.map(([x, y], i) => (
          <g key={i} transform={`translate(${x} ${y})`}>
            <path d="M-9 34L0 0L36 16" stroke="#4db53f" />
            <path d="M14 41L44 55" stroke="#4d9a45" />
            <path d="M36 16L110 51L103 82M44 55L89 75L107 4L122 11" stroke="#9b8a84" />
          </g>
        ))}
      </g>
      <g stroke="#8d8078" fill="none">
        <path d="M546 356L1130 201" />
        <path d="M570 364L1110 221" />
        <path d="M590 372L1118 232" />
        <path d="M600 331L1128 193" />
      </g>
      <g stroke="#7fe07f" strokeWidth="1.600" fill="none">
        <path d="M526 384L535 343L1063 206" />
        <path d="M526 384L1054 246" />
        <path d="M1063 206L1054 246" />
      </g>
      <g stroke="#fff" strokeWidth="2" fill="none">
        <path d="M535 343L583 366L593 325L617 336L596 416L526 384" />
        <path d="M593 325L1122 185L1145 196L1124 276L1054 244" />
        <path d="M617 336L1145 196" />
        <path d="M596 416L1124 276" />
        <path d="M583 366L1112 225L1122 185" />
        <path d="M1112 225L1064 204" />
      </g>

      <g stroke="#7c7c7c" fill="none">
        <circle cx="767" cy="320" r="135.500" />
        <circle cx="767" cy="185" r="8.500" />
        <circle cx="767" cy="456" r="8.500" />
        <circle cx="903" cy="320" r="8.500" />
      </g>
      <circle cx="632" cy="320" r="8.500" stroke="#3f7f3f" fill="none" />
      <g stroke="#008000" fill="none">
        <circle cx="491" cy="460" r="12.500" />
        <circle cx="849" cy="181" r="12.500" />
        <circle cx="183" cy="258" r="12.500" />
        <circle cx="183" cy="337" r="12.500" />
      </g>
      <g fill="#c0c0c0" fontFamily="Liberation Sans" fontSize="15" textAnchor="middle">
        <text x="491" y="465">0</text>
        <text x="849" y="186">8</text>
      </g>
      <path d="M480 462L505 456M838 176L861 187" stroke="#f00" />

      {/* axis marker */}
      <g strokeWidth="4">
        <path d="M225 422L195 410" stroke="#0f0" />
        <path d="M225 422L245 417" stroke="#f00" />
        <path d="M225 422L234 388" stroke="#0080ff" />
      </g>
      <path d="M186 405l12 1-4 7z" fill="#0f0" />
      <path d="M253 416l-8-3 2 8z" fill="#f00" />
      <path d="M237 377l-6 12 8 2z" fill="#0080ff" />
      <g fontFamily="Liberation Sans" fontSize="12">
        <text x="195" y="410" fill="#0f0">Y</text>
        <text x="231" y="416" fill="#f00">X</text>
        <text x="227" y="384" fontSize="14" fill="#0080ff">Z</text>
      </g>
    </svg>
  );
}

function DisplayPanel() {
  const options = ['水平纵筋', '横向钢筋', '显示其它图元', '显示详细公式'];
  return (
    <section className="absolute top-0.5 left-2.5 flex h-[179px] w-[167px] flex-col border border-[#808080] bg-white">
      <h2 className="px-[7px] pt-[7px] pb-[7px] leading-4 text-[#9a9a9a]">钢筋显示控制面板</h2>
      <ul className={clsx('flex-1 border-2 border-[#828790] pt-0.5 pl-0.5', SONG_FONT)}>
        {options.map((o) => (
          <li key={o} className="h-3">
            <label className="flex h-3 items-center gap-1 leading-3">
              <span className="relative flex">
                <input type="checkbox" defaultChecked className="peer size-[11px] appearance-none border border-[#707070] bg-white" />
                <svg viewBox="0 0 11 11" className="pointer-events-none absolute inset-0 size-[11px] opacity-0 peer-checked:opacity-100">
                  <path d="M2 5.500l2.500 2.500L9 3" stroke="#333" strokeWidth="1.400" fill="none" />
                </svg>
              </span>
              {o}
            </label>
          </li>
        ))}
      </ul>
    </section>
  );
}

function SnapBar() {
  return (
    <div className="flex h-[30px] shrink-0 items-center gap-px pl-0.5 text-black">
      <Group>
        <Tool icon="ortho" label="正交" />
        <Tool icon="snap" label="对象捕捉" active />
        <Tool icon="dynInput" label="动态输入" />
      </Group>
      <Group>
        <Tool icon="cross" label="交点" />
        <Tool icon="perp" label="垂点" active />
        <Tool icon="mid" label="中点" active />
        <Tool icon="vertex" label="顶点" />
        <Tool icon="coord" label="坐标" />
      </Group>
      <Group className="pr-2 text-[#707070]">
        <Combo label="偏移方式" value="不偏移" className="w-[58px] text-black" />
        <Sep />
        <span className="w-5">X=</span>
        <Spinner label="X" value="0" className="w-[58px]" />
        <span className="mx-0.5 w-6">mm</span>
        <span className="w-[18px]">Y=</span>
        <Spinner label="Y" value="0" className="w-[58px]" />
        <span className="ml-0.5 w-6">mm</span>
        <Sep />
        <label className="mr-1 flex items-center gap-2 text-black">
          <input type="checkbox" className="ml-px size-[11px] appearance-none border border-[#a0a0a0] bg-[#f4f4f4]" />
          旋转
        </label>
        <Spinner label="角度" value="0.000" className="w-[68px]" />
        <span className="ml-0.5">°</span>
      </Group>
    </div>
  );
}

/* ---------- rebar table ---------- */

const columns = [
  ['', 'w-[33px]'], ['筋号', 'w-[73px]'], ['直径(mm)', 'w-[56px]'], ['级别', 'w-[36px]'], ['图号', 'w-[33px]'],
  ['图形', 'w-[201px]'], ['计算公式', 'w-[166px]'], ['公式描述', 'w-[156px]'], ['长度(mm)', 'w-[61px]'],
  ['根数', 'w-[38px]'], ['搭接', 'w-[39px]'], ['损耗(%)', 'w-[49px]'], ['单重(kg)', 'w-[61px]'],
  ['总重(kg)', 'w-[61px]'], ['钢筋归类', 'w-[71px]'], ['搭接形式', 'w-[70px]'],
];

function Shape({ d, labels, h }) {
  return (
    <svg viewBox={`0 0 200 ${h}`} width="200" height={h} className="block overflow-visible">
      <path d={d} stroke="#000" strokeWidth="2" fill="none" shapeRendering="crispEdges" />
      {labels.map(([x, y, t, turn, fill]) => (
        <text key={t} x={x} y={y} fontSize="12" fill={fill || '#000'} transform={turn ? `rotate(${turn} ${x} ${y})` : undefined}>
          {t}
        </text>
      ))}
    </svg>
  );
}

const rows = [
  {
    no: '1*', h: 'h-[54px]', double: true,
    shape: <Shape h={53} d="M33 49V14H169V46" labels={[[66, 16, '194'], [130, 13, '285'], [17, 14, '126', 90], [184, 32, '116', -90]]} />,
    cells: ['横向钢筋.1', '8', '0', '401+40*d', '净长+端头', '721', '18', '0', '0', '0.285', '5.126', '直筋', '绑扎'],
  },
  {
    no: '2', h: 'h-[61px]', double: true,
    shape: <Shape h={60} d="M62 51H117V6H127" labels={[[130, 14, '66'], [102, 8, '270', 90], [81, 58, '100'], [105, 58, '223']]} />,
    cells: ['横向钢筋.2', '8', '0', '559+100', '净长+端头', '659', '18', '0', '0', '0.26', '4.685', '直筋', '绑扎'],
  },
  {
    no: '3', h: 'h-[28px]', double: false,
    shape: <Shape h={27} d="M36 24V15H40M162 15H166V24" labels={[[78, 15, '3250', 0, '#f00']]} />,
    cells: ['水平纵筋.1', '6', '3', '3250+12.5*d', '净长+两倍弯钩', '3325', '4', '0', '0', '0.865', '3.458', '直筋', '绑扎'],
  },
];

function Grade({ double }) {
  return (
    <svg viewBox="0 0 10 10" className="mx-auto size-2.5" role="img" aria-label={double ? '二级钢' : '一级钢'}>
      <path
        d={double ? 'M4.500 0v10M1.500 2.500h6v4h-6zM0 8.500h9' : 'M4.500 0v10M1.500 2.500h6v4h-6z'}
        stroke="#000"
        fill="none"
        shapeRendering="crispEdges"
      />
    </svg>
  );
}

function RebarTable() {
  const cell = 'truncate border-r border-b border-[#c0c0c0] p-0 pl-0.5';
  return (
    <table className="w-[1204px] shrink-0 table-fixed border-separate border-spacing-0 text-left">
      <thead>
        <tr className="h-5">
          {columns.map(([name, w], i) => (
            <th
              key={i}
              className={clsx(
                w,
                'overflow-hidden border-r border-b border-[#c0c0c0] p-0 text-center leading-4 font-normal whitespace-nowrap',
                i === 2 ? 'bg-[#f8cc80] text-[#5c0050]' : 'bg-linear-to-b from-white to-[#f0f0f0]',
              )}
            >
              {name}
            </th>
          ))}
        </tr>
      </thead>
      <tbody className="bg-[#ccffd9]">
        {rows.map((r, i) => {
          const [name, dia, fig, ...rest] = r.cells;
          return (
            <tr key={r.no} className={r.h}>
              <th className={clsx('border-r border-b border-[#c0c0c0] p-0 text-center font-normal', i === 0 ? 'bg-[#ffd28c] text-[#5c0050]' : 'bg-[#f8f8f8]')}>
                {r.no}
              </th>
              <td className="truncate border-r border-b border-r-black border-b-[#c0c0c0] p-0 pl-0.5">{name}</td>
              <td className={clsx(cell, i === 0 && 'bg-[#acebda]')}>{dia}</td>
              <td className={cell}><Grade double={r.double} /></td>
              <td className={cell}>{fig}</td>
              <td className="border-r border-b border-[#c0c0c0] p-0">{r.shape}</td>
              {rest.map((c, j) => <td key={j} className={cell}>{c}</td>)}
            </tr>
          );
        })}
      </tbody>
    </table>
  );
}

function RebarPanel() {
  return (
    <div className="flex h-[204px] shrink-0 pt-1 pb-px">
      <div className="flex w-[13px] shrink-0 flex-col items-center">
        <button type="button" aria-label="关闭面板" className="mb-1 size-[11px] border border-[#555] bg-white">
          <svg viewBox="0 0 9 9" className="size-[9px]"><path d="M1 1l7 7M8 1L1 8" stroke="#333" strokeWidth="1.500" /><path d="M0 0h2v2H0z" fill="#c22" /></svg>
        </button>
        <span className="w-2.5 flex-1 bg-[radial-gradient(#bdbdbd_1px,transparent_1px)] bg-[size:5px_5px]" />
      </div>
      <div className="flex min-w-0 flex-1 flex-col pr-0.5">
        <div className="flex h-[26px] shrink-0 items-center bg-linear-to-b from-[#fdfdfd] to-[#eeeeee]">
          <IconButton icon="first" label="第一条" disabled />
          <IconButton icon="prev" label="上一条" disabled />
          <IconButton icon="next" label="下一条" />
          <IconButton icon="last" label="最后一条" />
          <IconButton icon="up" label="上移" disabled />
          <IconButton icon="down" label="下移" />
          <Sep />
          <Tool icon="insert" label="插入" disabled />
          <Tool icon="remove" label="删除" disabled />
          <Tool icon="scaleBar" label="缩尺配筋" disabled />
          <Tool icon="barInfo" label="钢筋信息" />
          <Tool icon="barLib" label="钢筋图库" />
          <Tool icon="other" label="其他" caret tight />
          <Tool label="关闭" />
          <Sep />
          <span className="ml-1 leading-4">单构件钢筋总重(kg)：13.27</span>
        </div>
        <div className={clsx('flex min-h-0 flex-1 flex-col border border-[#a0a0a8] bg-white pb-0.5', SONG_FONT)}>
          <div className="flex min-h-0 flex-1">
            <div className="min-w-0 flex-1 overflow-hidden">
              <RebarTable />
            </div>
            <div className="flex w-4 shrink-0 flex-col items-center bg-[#f0f0f0] text-[#505050]">
              <Chevron dir="up" className="my-1" />
              <span className="h-[23px] w-full bg-[#cdcdcd]" />
              <Chevron className="mt-auto mb-1" />
            </div>
          </div>
          <div className="flex h-4 shrink-0 items-center bg-[#f0f0f0] text-[#505050]">
            <Chevron dir="left" className="mx-1" />
            <span className="h-full w-[811px] bg-[#cdcdcd]" />
            <Chevron dir="right" className="mr-5 ml-auto" />
          </div>
        </div>
      </div>
    </div>
  );
}

function StatusBar() {
  const box = 'flex h-5 items-center border border-[#dcdcdc] bg-linear-to-b from-[#fdfdfd] to-[#f2f2f2] pl-px leading-4 whitespace-nowrap';
  return (
    <footer className={clsx('flex h-[21px] shrink-0 gap-[3px] bg-[#f8f8f8] pt-px', SONG_FONT)}>
      <span className={clsx(box, 'w-[147px]')}>X=114433 Y=-10278</span>
      <span className={clsx(box, 'w-[77px]')}>层高:2.8m</span>
      <span className={clsx(box, 'w-[97px]')}>底标高:20.35m</span>
      <span className={clsx(box, 'w-[47px]')}>1(1)</span>
      <span className={clsx(box, 'flex-1')} />
      <span className={clsx(box, 'w-[70px]')}>310.4 FPS</span>
    </footer>
  );
}

/* ---------- Windows taskbar ---------- */

const apps = [
  {
    name: '任务视图',
    art: <path d="M8.500 7.500h11v13h-11zM5.500 9v10H4M4 9h2M22.500 9v10H24M24 9h-2" stroke="#fff" strokeWidth="1.200" fill="none" />,
  },
  {
    name: '浏览器',
    art: (
      <g fill="#e8e8e8">
        <path d="M13.500 13.500V5C13 3 9 3 7 4.500c-2 1-2 3-1 4.500 2 0 4 1 7.500 4.500z" />
        <path d="M14.500 13.500H23c2-.5 2-4.500.5-6.500-1-2-3-2-4.500-1 0 2-1 4-4.500 7.500z" />
        <path d="M14.500 14.500V23c.5 2 4.500 2 6.500.5 2-1 2-3 1-4.500-2 0-4-1-7.500-4.500z" />
        <path d="M13.500 14.500H5c-2 .5-2 4.500-.5 6.500 1 2 3 2 4.500 1 0-2 1-4 4.500-7.500z" />
        <path d="M5 10c-1.500 0-2 2-1 3h7zM18 5c0-1.500-2-2-3-1v7zM23 18c1.500 0 2-2 1-3h-7zM10 23c0 1.500 2 2 3 1v-7z" />
      </g>
    ),
  },
  {
    name: '浏览器 e',
    art: (
      <>
        <path d="M7 14.500h15c0-11-15-11-15 0 0 9 11 9 14 4" stroke="#ececec" strokeWidth="3.600" fill="none" />
        <path d="M22 7c2-6-6-3-12 3S2 25 8 24" stroke="#ececec" strokeWidth="1.500" fill="none" />
      </>
    ),
  },
  {
    name: '旋风',
    art: (
      <g stroke="#b8bcbe" fill="none">
        <path d="M24 6c-3 2-5 0-9 0-6 0-10 4-10 9s4 8 9 8 8-3 8-6" strokeWidth="1.800" />
        <path d="M20 9c-5-1-10 1-10 6 0 4 6 5 8 2 1-2-1-4-3-3" strokeWidth="1.800" />
      </g>
    ),
  },
  {
    name: 'Edge',
    art: <path d="M4 13C5 7 9 3 15 3c7 0 10 5 10 12H11c0 6 8 7 13 4v5c-8 4-18 1-18-8 0-4 3-6 6-7-4 0-6 2-8 4zM11 12h9c0-5-8-5-9 0z" fill="#0a78d7" />,
  },
  {
    name: 'Internet Explorer',
    art: (
      <>
        <path d="M8 15h14c0-10-14-10-14 0 0 9 11 9 13 4" stroke="#3fb2ee" strokeWidth="4" fill="none" />
        <path d="M24 9c3-9-6-5-12 1S1 26 6 25" stroke="#f7cf3c" strokeWidth="2" fill="none" />
      </>
    ),
  },
  {
    name: '文件资源管理器',
    art: (
      <>
        <path d="M3 5h9l2 2h10v17H3z" fill="#f8dc84" />
        <path d="M3 9h21v8H3z" fill="#fce9a6" />
        <path d="M7 24v-8h14v8h-4v-4h-6v4z" fill="#36a9e0" />
      </>
    ),
  },
  {
    name: '高速浏览器', running: true,
    art: <path d="M26 3c-1 4-4 5-7 5-5-1-9 2-9 6s3 6 7 5c2 0 3-1 3-3h-5v-4h10c1 8-3 13-10 13C7 26 2 21 3 14 4 5 13 1 19 4c3 1 5 0 7-1z" fill="#1e96f0" />,
  },
  {
    name: '360浏览器', running: true,
    art: (
      <>
        <circle cx="14" cy="14" r="10" fill="#4cba2c" stroke="#d6f2c8" strokeWidth="1.500" />
        <path d="M8 14.500h12c0-8-12-8-12 0 0 7 9 7 11 3" stroke="#fff" strokeWidth="3" fill="none" />
      </>
    ),
  },
  {
    name: '广联达', running: true, active: true,
    art: (
      <>
        <rect x="2" y="2" width="24" height="24" rx="4" fill="#0a8cf0" />
        <path d="M17 7.500C15 6.500 13.500 7 13.500 9V21M10 14H7c0 4 3 5.500 7 5.500M13.500 14H21c0 4-2.500 5.500-7 5.500" stroke="#fff" strokeWidth="2" fill="none" strokeLinecap="round" strokeLinejoin="round" />
      </>
    ),
  },
];

function Taskbar() {
  return (
    <div className="flex h-10 shrink-0 bg-[#010b0e] text-white">
      <button type="button" aria-label="开始" className="flex w-12 shrink-0 items-center justify-center bg-black">
        <svg viewBox="0 0 16 16" className="size-4"><path d="M0 2.300L6.500 1.400v6.200H0zM7.300 1.300L16 0v7.600H7.300zM0 8.400h6.500v6.200L0 13.700zM7.300 8.400H16V16l-8.700-1.300z" fill="#fff" /></svg>
      </button>
      <label className="flex w-[343px] shrink-0 items-center bg-[#333333] pr-3 pl-2">
        <svg viewBox="0 0 22 22" className="mr-1.5 size-[22px]"><circle cx="11" cy="11" r="9" fill="none" stroke="#fff" strokeWidth="3" /></svg>
        <input aria-label="搜索" placeholder="在这里输入你要搜索的内容" className="min-w-0 flex-1 bg-transparent text-sm outline-none placeholder:text-[#a0a0a0]" />
        <svg viewBox="0 0 16 18" className="h-[18px] w-4"><path d="M5.500 1.500h5v9h-5zM3 8v5h10V8M8 13v4M5 17h6" stroke="#a8a8a8" fill="none" /></svg>
      </label>
      {apps.map((a) => (
        <button
          key={a.name}
          type="button"
          aria-label={a.name}
          className={clsx('flex w-[50px] shrink-0 flex-col items-center justify-between pt-1.5', a.active && 'bg-[#333f45]')}
        >
          <svg viewBox="0 0 28 28" className="size-7">{a.art}</svg>
          {a.running && <span className={clsx('h-0.5 bg-[#76b9ed]', a.active ? 'w-full' : 'w-10')} />}
        </button>
      ))}
      <div className="ml-auto flex items-center text-xs">
        <span className="mr-3.5 leading-4">链接</span>
        <svg viewBox="0 0 20 16" className="mr-2 h-4 w-5"><path d="M1.500 6c5-5 12-5 17 0M4.500 9.500c3-3 8-3 11 0" stroke="#5fd400" strokeWidth="2.200" fill="none" /><circle cx="10" cy="13" r="2" fill="#5fd400" /></svg>
        <svg viewBox="0 0 14 10" className="mr-2 h-2.5 w-3.5"><path d="M1 8l6-6 6 6" stroke="#fff" strokeWidth="1.300" fill="none" /></svg>
        <svg viewBox="0 0 18 12" className="mr-2.5 h-3 w-[18px]"><path d="M4.500 4.500h11v6h-11zM16 6h1.500v3H16" stroke="#fff" fill="none" /><path d="M6 6h8v3H6zM0 1h5v3H3v2H2V4H0z" fill="#fff" /></svg>
        <svg viewBox="0 0 14 14" className="mr-2 size-3.5"><path d="M1 12C2 6 6 2 13 1M4 13c1-5 4-8 9-8M7 13c1-3 3-4 6-4" stroke="#ddd" strokeWidth="1.200" fill="none" /><circle cx="11.500" cy="12" r="1.500" fill="#fff" /></svg>
        <svg viewBox="0 0 18 14" className="mr-2 h-3.5 w-[18px]"><path d="M1 5h3l4-4v12L4 9H1z" stroke="#fff" fill="none" /><path d="M10.500 5c1 1 1 3 0 4M13 3c2 2 2 6 0 8M15.500 1.500c3 3 3 8 0 11" stroke="#bbb" fill="none" /></svg>
        <svg viewBox="0 0 24 14" className="mr-2 h-3.5 w-6"><path d="M.5.5h23v12H.5z" stroke="#fff" fill="none" /><path d="M3 4h18M3 7h18" stroke="#fff" strokeWidth="1.500" strokeDasharray="2 1" /><path d="M6 10h12" stroke="#fff" strokeWidth="1.500" /></svg>
        <span className="mr-3.5 w-3.5 text-center text-xl leading-5">A</span>
        <svg viewBox="0 0 16 16" className="mr-3 size-4"><path d="M1 2l13-2 2 13-13 3z" fill="#f04a14" /><path d="M12 4c-4-2-8 0-6 2.500 2 1.500 6 .5 6 3S7 13 4 11.500" stroke="#fff" strokeWidth="2.200" fill="none" /></svg>
        <time className="w-[66px] text-center leading-[19px]">
          21:21
          <br />
          2018/7/7
        </time>
        <svg viewBox="0 0 18 18" className="mr-[19px] ml-4 size-[18px]"><path d="M1 2h16v11h-5l-3 3v-3H1z" stroke="#fff" strokeWidth="1.200" fill="none" /></svg>
        <span className="mr-1 h-10 w-px bg-[#555]" />
      </div>
    </div>
  );
}

/* ---------- floating widgets over the window ---------- */

function ImeBar() {
  return (
    <div className="absolute top-3.5 right-[424px] flex h-6 w-[200px] items-center justify-between border border-[#b5c6d6] bg-white pr-1 pl-7 text-[#1b77c8]">
      <svg viewBox="0 0 28 28" className="absolute -top-1 -left-2 size-7">
        <path d="M2 4l20-3 4 20-20 5z" fill="#f4511e" />
        <path d="M20 7C13 4 6 7 9 11c3 3 12 1 11 6-1 4-9 4-13 1" stroke="#fff" strokeWidth="3.600" fill="none" />
      </svg>
      <b className="text-lg leading-5 font-semibold">A</b>
      <svg viewBox="0 0 16 16" className="size-4"><circle cx="5" cy="6" r="2" fill="currentColor" /><path d="M10 9h3c1 3-1 4-3 5 1-1 2-2 0-5z" fill="currentColor" /></svg>
      <svg viewBox="0 0 16 16" className="size-4"><circle cx="8" cy="8" r="7" fill="none" stroke="currentColor" strokeWidth="1.500" /><path d="M4 9c1 4 7 4 8 0" stroke="currentColor" strokeWidth="1.500" fill="none" /><path d="M5 4.500h1.500V7H5zM9.500 4.500H11V7H9.500z" fill="currentColor" /></svg>
      <svg viewBox="0 0 16 16" className="size-4"><rect x="5" y="1" width="6" height="9" rx="3" fill="currentColor" /><path d="M2.500 7c0 6 11 6 11 0M8 12v3M5 15h6" stroke="currentColor" strokeWidth="1.500" fill="none" /></svg>
      <svg viewBox="0 0 16 16" className="size-4"><rect y="3" width="16" height="11" rx="1" fill="currentColor" /><path d="M2 6h12M2 8.500h12M4 11.500h8" stroke="#fff" strokeDasharray="1.500 1" /></svg>
      <svg viewBox="0 0 18 16" className="h-4 w-[18px]"><circle cx="6" cy="4" r="3" fill="#b9c4d8" /><path d="M0 14c0-7 9-7 11-3v3z" fill="#b9c4d8" /><path d="M7 9h4v2.500H7.500V14H11M13 9v3h4M16 9v5" stroke="#8d9ab4" fill="none" /></svg>
      <svg viewBox="0 0 16 16" className="size-4"><path d="M5 2c1 2 5 2 6 0l5 2-1.500 4-2.500-1v8H4V7L1.500 8 0 4z" fill="currentColor" /></svg>
      <svg viewBox="0 0 16 16" className="size-4"><path d="M15 4l-3 2-2-2 2-3c-3-1-6 1-5 5l-6 6c-1 2 1 4 3 3l6-6c4 1 6-2 5-5z" fill="currentColor" /></svg>
    </div>
  );
}

function NetPill() {
  return (
    <div className="absolute top-[30px] right-[379px] flex h-[49px] w-[121px] items-center rounded-full border border-[#c4c4c4] bg-white pl-1 text-[11px] text-[#666] shadow-md">
      <svg viewBox="0 0 42 42" className="size-[42px]">
        <circle cx="21" cy="21" r="20" fill="#27cc70" />
        <path d="M9 17c7-7 17-7 24 0M13 22c5-5 11-5 16 0M17 26c3-2 5-2 8 0" stroke="#fff" strokeWidth="2.600" fill="none" strokeLinecap="round" />
        <circle cx="21" cy="31" r="2" fill="#fff" />
      </svg>
      <div className="ml-1 flex flex-col gap-1">
        <span className="flex items-center gap-0.5 leading-4">
          <svg viewBox="0 0 12 12" className="size-3"><path d="M4 0v9M1 7l3 4" stroke="#27cc70" strokeWidth="2" fill="none" /><path d="M8 12V2M11 5L8 1" stroke="#f58220" strokeWidth="2" fill="none" /></svg>
          0.00K/s
        </span>
        <span className="flex items-center gap-0.5 leading-4">
          <svg viewBox="0 0 12 12" className="size-3"><path d="M2.500 3h7v8h-7zM4 1h4v2H4z" stroke="#27cc70" strokeWidth="1.500" fill="none" /><path d="M3 7h6v4H3z" fill="#27cc70" /></svg>
          0
        </span>
      </div>
    </div>
  );
}

function ScoreBall() {
  return (
    <div className="absolute -top-[28px] right-[312px] flex size-[47px] items-end justify-center rounded-full border-2 border-[#b4b4b4] bg-linear-to-b from-[#3fc66b] to-[#3cba4c] pb-1.5 font-['DejaVu_Sans',sans-serif] text-[11px] leading-2 font-bold text-white shadow">
      65
    </div>
  );
}

export default function App() {
  return (
    <div className={clsx('relative flex h-screen flex-col overflow-hidden bg-[#f0f0f0] text-xs text-black', UI_FONT)}>
      <TitleBar />
      <MenuBar />
      <MainToolbar />
      <div className="flex min-h-0 flex-1">
        <Sidebar />
        <main className="flex min-w-0 flex-1 flex-col pl-1">
          <EditRows />
          <div className="relative min-h-0 flex-1 overflow-hidden bg-black">
            <Scene />
            <DisplayPanel />
          </div>
          <SnapBar />
          <RebarPanel />
        </main>
      </div>
      <StatusBar />
      <Taskbar />
      <NetPill />
      <ImeBar />
      <ScoreBall />
    </div>
  );
}
